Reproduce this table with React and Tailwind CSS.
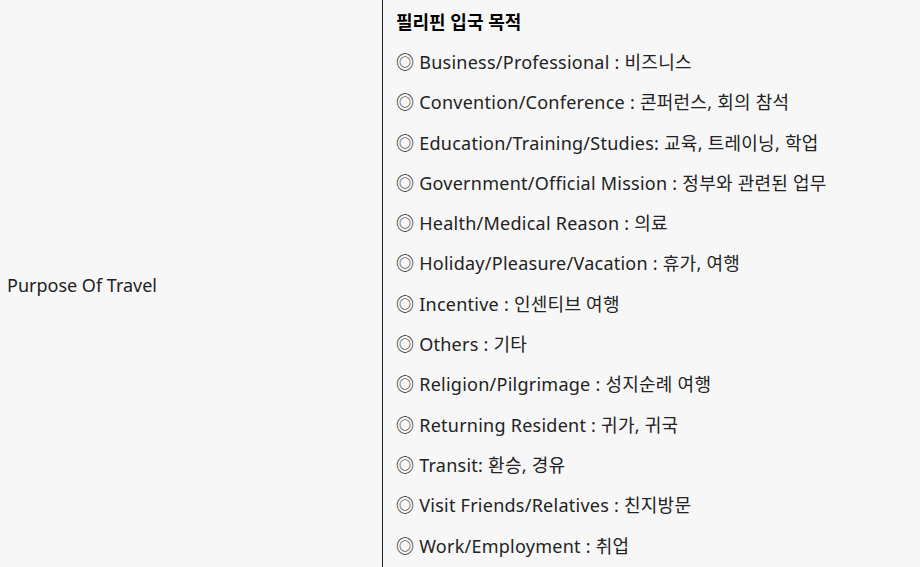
const purposes = [
  "Business/Professional : 비즈니스",
  "Convention/Conference : 콘퍼런스, 회의 참석",
  "Education/Training/Studies: 교육, 트레이닝, 학업",
  "Government/Official Mission : 정부와 관련된 업무",
  "Health/Medical Reason : 의료",
  "Holiday/Pleasure/Vacation : 휴가, 여행",
  "Incentive : 인센티브 여행",
  "Others : 기타",
  "Religion/Pilgrimage : 성지순례 여행",
  "Returning Resident : 귀가, 귀국",
  "Transit: 환승, 경유",
  "Visit Friends/Relatives : 친지방문",
  "Work/Employment : 취업",
];

export default function App() {
  return (
    <div className="min-h-screen bg-[#f7f7f7] font-['Noto_Sans','Noto_Sans_CJK_KR',sans-serif] text-[18px] text-[#222]">
      <div className="flex">
        <div className="w-[382px] shrink-0 flex items-center px-[7px]">
          Purpose Of Travel
        </div>
        <div className="flex-1 border-l border-[#222] pl-[13px] pt-[2px] pb-[4px]">
          <div className="h-[40.3px] flex items-center font-bold text-black">
            필리핀 입국 목적
          </div>
          {purposes.map((p) => (
            <div key={p} className="h-[40.3px] flex items-center tracking-[0.25px]">
              ◎ {p}
            </div>
          ))}
        </div>
      </div>
    </div>
  );
}
